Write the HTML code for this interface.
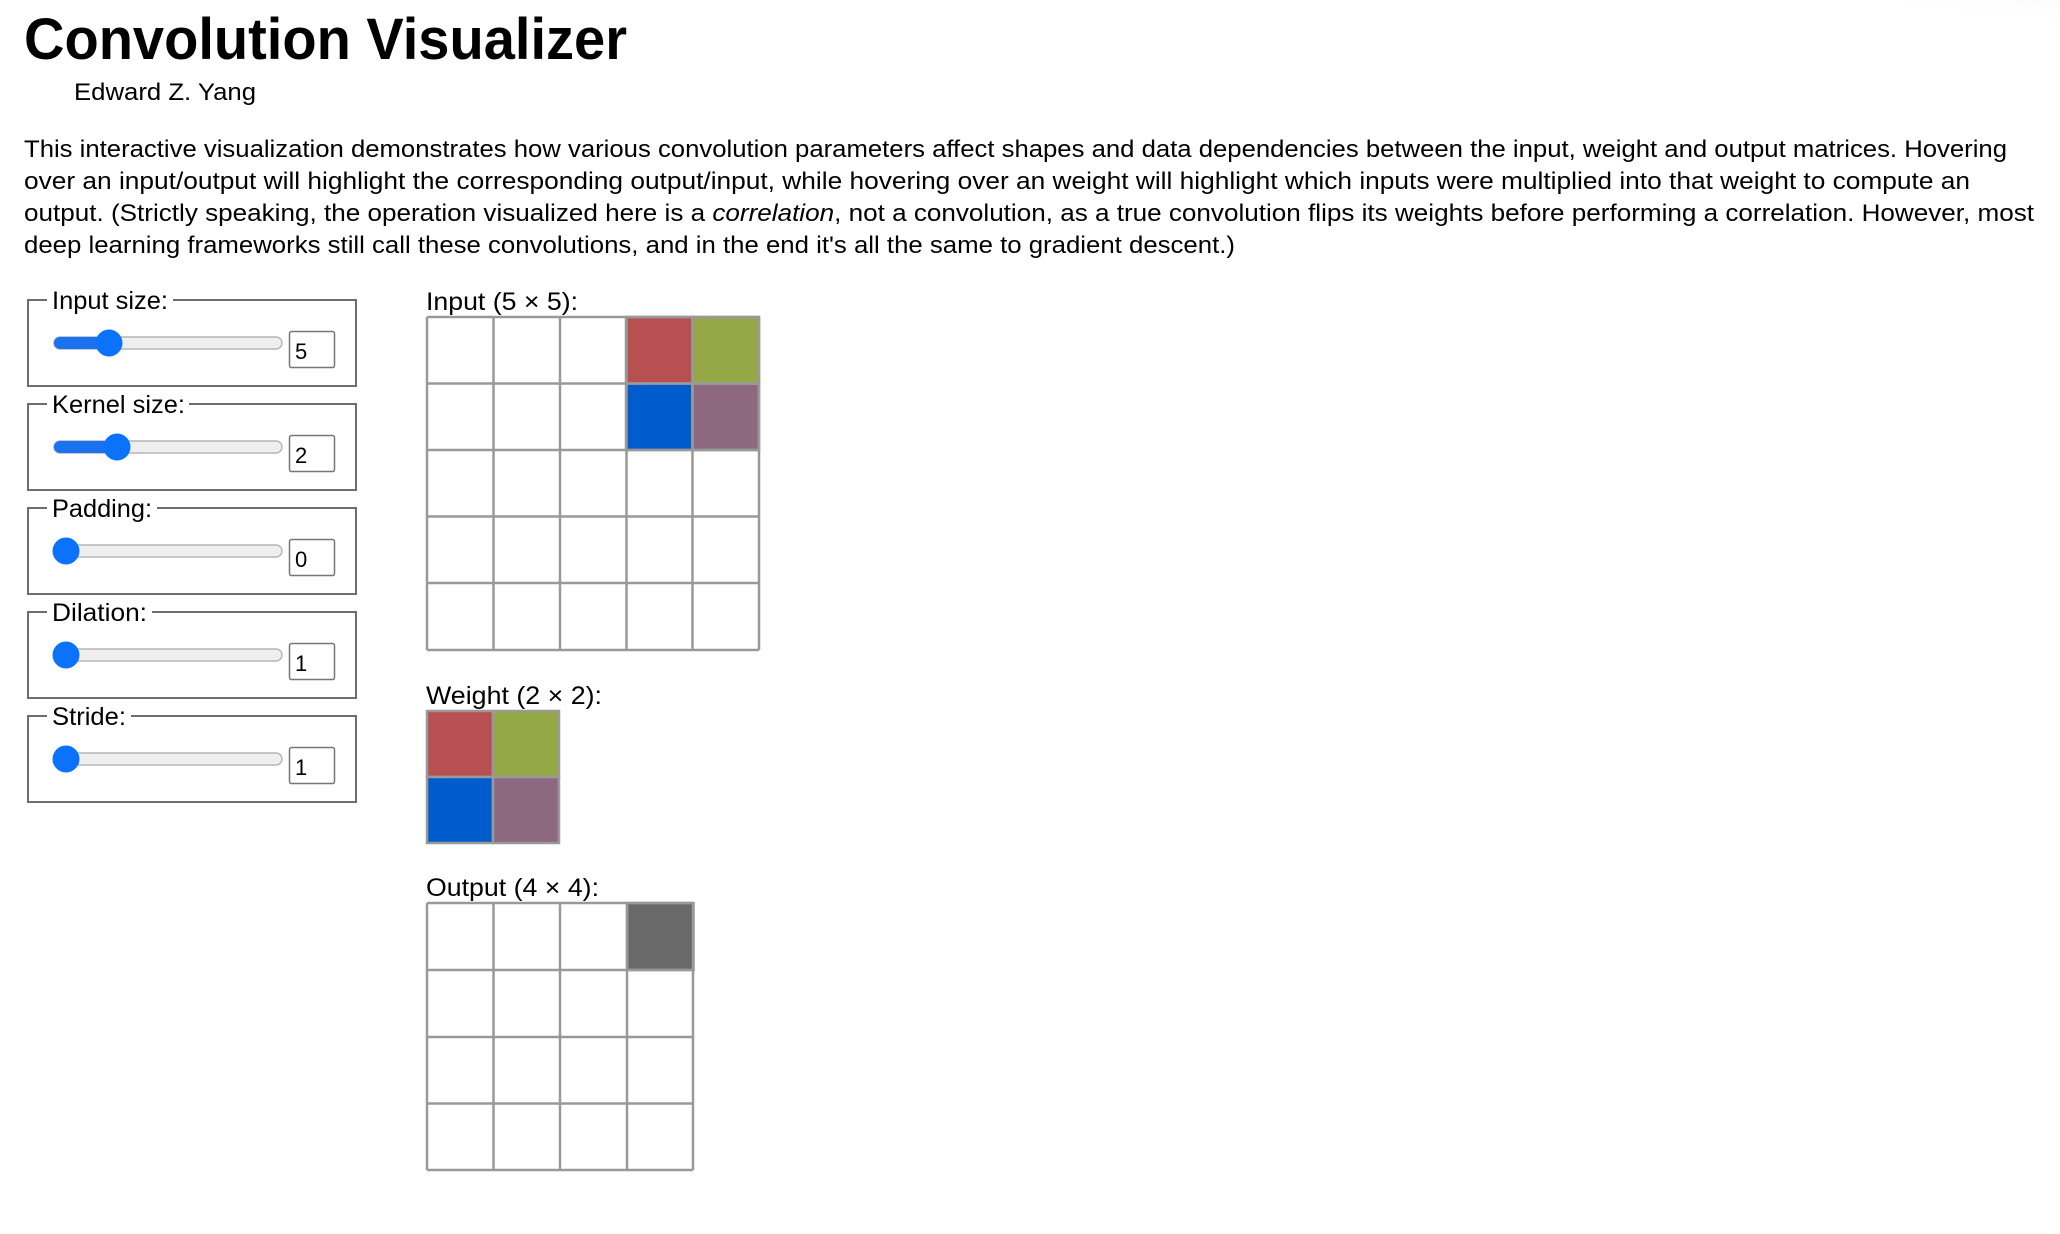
<!DOCTYPE html>
<html><head><meta charset="utf-8"><style>
html,body{margin:0;padding:0;background:#fff;width:2060px;height:1234px;overflow:hidden}
svg{display:block}
text{font-family:"Liberation Sans",sans-serif;fill:#000}
</style></head><body>
<svg width="2060" height="1234" viewBox="0 0 2060 1234" xmlns="http://www.w3.org/2000/svg">
<defs>
<radialGradient id="sh" cx="1" cy="0" r="1">
<stop offset="0" stop-color="#e6e6e6"/><stop offset="1" stop-color="#fff" stop-opacity="0"/>
</radialGradient>
</defs>
<ellipse cx="2000" cy="0" rx="220" ry="30" fill="url(#sh)"/>
<text x="24" y="59" font-size="58" font-weight="bold" textLength="603" lengthAdjust="spacingAndGlyphs">Convolution Visualizer</text>
<text x="74" y="100" font-size="24" textLength="182" lengthAdjust="spacingAndGlyphs">Edward Z. Yang</text>
<g font-size="24">
<text x="24" y="157" textLength="1983" lengthAdjust="spacingAndGlyphs">This interactive visualization demonstrates how various convolution parameters affect shapes and data dependencies between the input, weight and output matrices. Hovering</text>
<text x="24" y="189" textLength="1946" lengthAdjust="spacingAndGlyphs">over an input/output will highlight the corresponding output/input, while hovering over an weight will highlight which inputs were multiplied into that weight to compute an</text>
<text x="24" y="221" textLength="2010" lengthAdjust="spacingAndGlyphs">output. (Strictly speaking, the operation visualized here is a <tspan font-style="italic">correlation</tspan>, not a convolution, as a true convolution flips its weights before performing a correlation. However, most</text>
<text x="24" y="253" textLength="1211" lengthAdjust="spacingAndGlyphs">deep learning frameworks still call these convolutions, and in the end it's all the same to gradient descent.)</text>
</g>

<!-- fieldsets -->
<g id="fs">
<g transform="translate(0,0)">
<rect x="28" y="300" width="328" height="86" fill="none" stroke="#6e6e6e" stroke-width="2"/>
<rect x="47" y="290" width="126" height="20" fill="#fff"/>
<text x="52" y="309" font-size="25" textLength="116" lengthAdjust="spacingAndGlyphs">Input size:</text>
<rect x="54" y="337" width="228" height="12" rx="6" fill="#efefef" stroke="#b5b5b5" stroke-width="1.5"/>
<rect x="54" y="337" width="55" height="12" rx="6" fill="#1a72f0"/>
<circle cx="109" cy="343" r="13.5" fill="#0a72fb"/>
<rect x="289.5" y="331.5" width="45" height="36" rx="2" fill="#fff" stroke="#777" stroke-width="1.5"/>
<text x="295" y="359" font-size="22">5</text>
</g>
<g transform="translate(0,104)">
<rect x="28" y="300" width="328" height="86" fill="none" stroke="#6e6e6e" stroke-width="2"/>
<rect x="47" y="290" width="142" height="20" fill="#fff"/>
<text x="52" y="309" font-size="25" textLength="133" lengthAdjust="spacingAndGlyphs">Kernel size:</text>
<rect x="54" y="337" width="228" height="12" rx="6" fill="#efefef" stroke="#b5b5b5" stroke-width="1.5"/>
<rect x="54" y="337" width="63" height="12" rx="6" fill="#1a72f0"/>
<circle cx="117" cy="343" r="13.5" fill="#0a72fb"/>
<rect x="289.5" y="331.5" width="45" height="36" rx="2" fill="#fff" stroke="#777" stroke-width="1.5"/>
<text x="295" y="359" font-size="22">2</text>
</g>
<g transform="translate(0,208)">
<rect x="28" y="300" width="328" height="86" fill="none" stroke="#6e6e6e" stroke-width="2"/>
<rect x="47" y="290" width="110" height="20" fill="#fff"/>
<text x="52" y="309" font-size="25" textLength="100" lengthAdjust="spacingAndGlyphs">Padding:</text>
<rect x="54" y="337" width="228" height="12" rx="6" fill="#efefef" stroke="#b5b5b5" stroke-width="1.5"/>
<circle cx="66" cy="343" r="13.5" fill="#0a72fb"/>
<rect x="289.5" y="331.5" width="45" height="36" rx="2" fill="#fff" stroke="#777" stroke-width="1.5"/>
<text x="295" y="359" font-size="22">0</text>
</g>
<g transform="translate(0,312)">
<rect x="28" y="300" width="328" height="86" fill="none" stroke="#6e6e6e" stroke-width="2"/>
<rect x="47" y="290" width="105" height="20" fill="#fff"/>
<text x="52" y="309" font-size="25" textLength="95" lengthAdjust="spacingAndGlyphs">Dilation:</text>
<rect x="54" y="337" width="228" height="12" rx="6" fill="#efefef" stroke="#b5b5b5" stroke-width="1.5"/>
<circle cx="66" cy="343" r="13.5" fill="#0a72fb"/>
<rect x="289.5" y="331.5" width="45" height="36" rx="2" fill="#fff" stroke="#777" stroke-width="1.5"/>
<text x="295" y="359" font-size="22">1</text>
</g>
<g transform="translate(0,416)">
<rect x="28" y="300" width="328" height="86" fill="none" stroke="#6e6e6e" stroke-width="2"/>
<rect x="47" y="290" width="84" height="20" fill="#fff"/>
<text x="52" y="309" font-size="25" textLength="74" lengthAdjust="spacingAndGlyphs">Stride:</text>
<rect x="54" y="337" width="228" height="12" rx="6" fill="#efefef" stroke="#b5b5b5" stroke-width="1.5"/>
<circle cx="66" cy="343" r="13.5" fill="#0a72fb"/>
<rect x="289.5" y="331.5" width="45" height="36" rx="2" fill="#fff" stroke="#777" stroke-width="1.5"/>
<text x="295" y="359" font-size="22">1</text>
</g>
</g>

<!-- Input grid -->
<text x="426" y="310" font-size="25" textLength="152" lengthAdjust="spacingAndGlyphs">Input (5 × 5):</text>
<g stroke="#999" stroke-width="2.5">
<rect x="626" y="317" width="66.5" height="66.5" fill="#b84f51"/>
<rect x="692.5" y="317" width="66.5" height="66.5" fill="#95a846"/>
<rect x="626" y="383.5" width="66.5" height="66.5" fill="#005ccc"/>
<rect x="692.5" y="383.5" width="66.5" height="66.5" fill="#8e687e"/>
<path fill="none" d="M427 317V650M493.5 317V650M560 317V650M626.5 317V650M692.5 317V650M759 317V650M427 317H759M427 383.5H759M427 450H759M427 516.5H759M427 583H759M427 650H759"/>
</g>

<!-- Weight grid -->
<text x="426" y="704" font-size="25" textLength="176" lengthAdjust="spacingAndGlyphs">Weight (2 × 2):</text>
<g stroke="#999" stroke-width="2.5">
<rect x="427" y="711" width="66" height="66" fill="#b84f51"/>
<rect x="493" y="711" width="66" height="66" fill="#95a846"/>
<rect x="427" y="777" width="66" height="66" fill="#005ccc"/>
<rect x="493" y="777" width="66" height="66" fill="#8e687e"/>
</g>

<!-- Output grid -->
<text x="426" y="896" font-size="25" textLength="173" lengthAdjust="spacingAndGlyphs">Output (4 × 4):</text>
<g stroke="#999" stroke-width="2.5">
<rect x="627" y="903" width="66.5" height="67" fill="#696969"/>
<path fill="none" d="M427 903V1170M493.5 903V1170M560 903V1170M627 903V1170M693 903V1170M427 903H693M427 970H693M427 1037H693M427 1103.5H693M427 1170H693"/>
</g>
</svg>
</body></html>
